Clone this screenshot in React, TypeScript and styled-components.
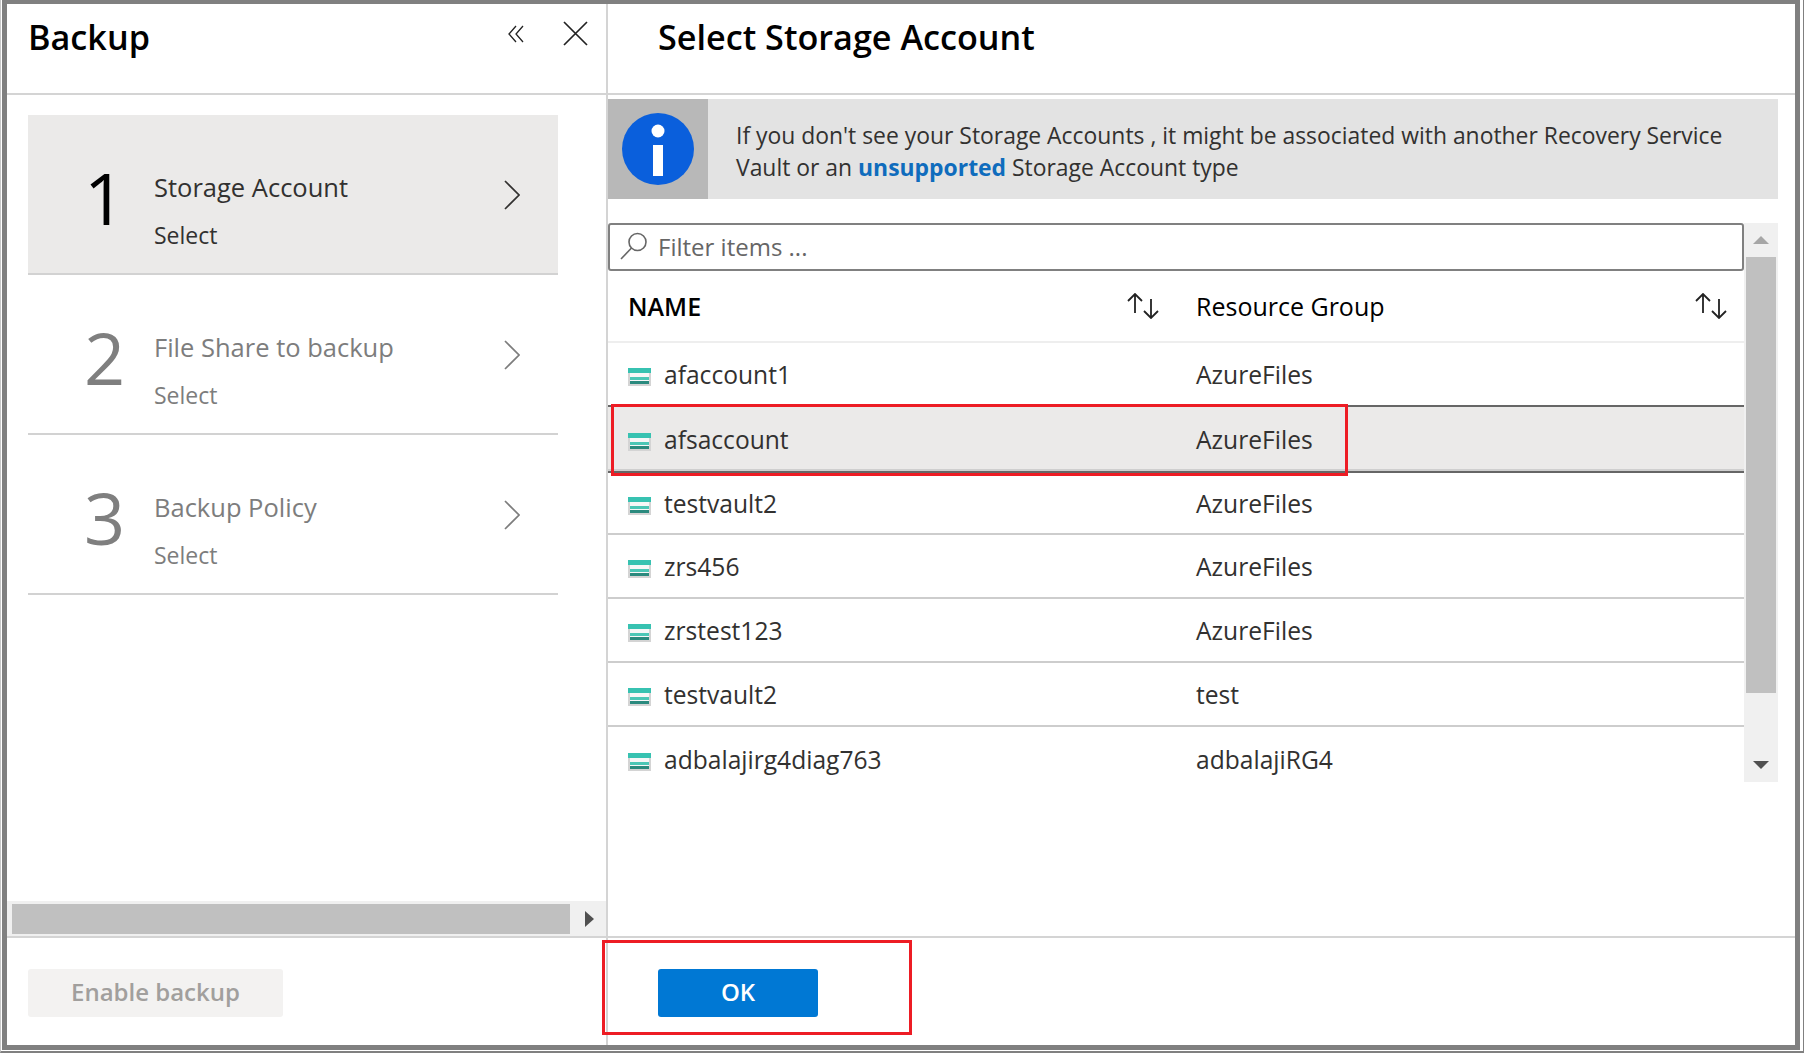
import styled, { createGlobalStyle } from 'styled-components';

const GlobalStyle = createGlobalStyle`
  html, body {
    margin: 0;
    padding: 0;
    background: #fff;
  }
  * {
    box-sizing: border-box;
  }
`;

const font = `"Open Sans", "Noto Sans", sans-serif`;

const Frame = styled.div`
  position: relative;
  width: 1804px;
  height: 1053px;
  padding: 0 3px 1px 1px;
  background: #fff;
  font-family: ${font};
  color: #323130;
  border-left: 1px solid #c8c8c8;
  border-right: 1px solid #808080;
  border-bottom: 2px solid #808080;
  overflow: hidden;
`;

const Inner = styled.div`
  height: 100%;
  display: flex;
  border-top: 4px solid #808080;
  border-left: 5px solid #808080;
  border-right: 5px solid #808080;
  border-bottom: 5px solid #808080;
`;

const LeftPanel = styled.section`
  width: 601px;
  flex: none;
  display: flex;
  flex-direction: column;
  border-right: 2px solid #d4d4d4;
`;

const RightPanel = styled.section`
  flex: 1;
  min-width: 0;
  display: flex;
  flex-direction: column;
`;

const Header = styled.header<{ $inset: number }>`
  height: 91px;
  flex: none;
  display: flex;
  align-items: flex-start;
  padding: 10px 0 0 ${({ $inset }) => $inset}px;
  border-bottom: 2px solid #d4d4d4;
`;

const Title = styled.h1`
  flex: 1;
  margin: 0;
  font-size: 34.2px;
  line-height: 46px;
  font-weight: 600;
  color: #000;
`;

const HeaderActions = styled.div`
  display: flex;
  align-items: center;
  gap: 39px;
  margin: 7px 18px 0 0;
  color: #222;
`;

const StepList = styled.div`
  flex: 1;
  padding: 20px 0 0 21px;
`;

const Step = styled.div<{ $active?: boolean }>`
  width: 530px;
  height: 160px;
  display: flex;
  padding-left: 56px;
  background: ${({ $active }) => ($active ? '#ebeae9' : 'transparent')};
  border-bottom: 2px solid #d2d2d2;
  color: ${({ $active }) => ($active ? '#323130' : '#7d7d7d')};
`;

const StepNumber = styled.div<{ $active?: boolean }>`
  width: 70px;
  font-size: 72px;
  line-height: 100px;
  padding-top: 32px;
  color: ${({ $active }) => ($active ? '#000' : '#7f7f7f')};
`;

const StepText = styled.div`
  flex: 1;
  padding-top: 56px;
`;

const StepTitle = styled.div`
  font-size: 25.5px;
  line-height: 33px;
`;

const StepSub = styled.div`
  margin-top: 16px;
  font-size: 23px;
  line-height: 30px;
`;

const StepChevron = styled.div`
  width: 54px;
  align-self: center;
  display: flex;
  margin-top: 2px;
`;

const HScroll = styled.div`
  height: 35px;
  flex: none;
  display: flex;
  align-items: center;
  background: #f0f0f0;
  padding-left: 5px;
`;

const HThumb = styled.div`
  width: 558px;
  height: 30px;
  background: #c0c0c0;
`;

const HArrow = styled.div`
  margin-left: 15px;
  width: 0;
  height: 0;
  border-left: 9px solid #505050;
  border-top: 8px solid transparent;
  border-bottom: 8px solid transparent;
`;

const Footer = styled.footer<{ $inset: number }>`
  height: 109px;
  flex: none;
  padding: 31px 0 0 ${({ $inset }) => $inset}px;
  border-top: 2px solid #d4d4d4;
`;

const Button = styled.button<{ $primary?: boolean }>`
  display: block;
  width: ${({ $primary }) => ($primary ? 160 : 255)}px;
  height: 48px;
  padding: 0 0 4px;
  border: 0;
  border-radius: 3px;
  font-family: inherit;
  font-size: 24px;
  font-weight: 600;
  background: ${({ $primary }) => ($primary ? '#0078d4' : '#f3f2f1')};
  color: ${({ $primary }) => ($primary ? '#fff' : '#a19f9d')};
`;

const Banner = styled.div`
  height: 100px;
  flex: none;
  margin: 4px 17px 0 0;
  display: flex;
  background: #e3e3e3;
`;

const BannerIcon = styled.div`
  width: 100px;
  flex: none;
  display: flex;
  align-items: center;
  justify-content: center;
  background: #b8b8b8;
`;

const BannerText = styled.p`
  margin: 0;
  padding: 21px 40px 0 28px;
  font-size: 22.9px;
  line-height: 31.5px;
  color: #323130;
`;

const BannerLink = styled.span`
  font-weight: 700;
  color: #0f6cbd;
`;

const ListArea = styled.div`
  display: flex;
  margin: 24px 17px 0 0;
`;

const Table = styled.div`
  position: relative;
  width: 1136px;
  flex: none;
`;

const FilterBox = styled.div`
  height: 48px;
  display: flex;
  align-items: center;
  gap: 9px;
  padding: 0 0 2px 9px;
  border: 2px solid #808080;
  border-radius: 3px;
  font-size: 24px;
  color: #666;
`;

const Row = styled.div<{ $selected?: boolean; $dark?: boolean; $height?: number; $last?: boolean }>`
  display: grid;
  grid-template-columns: 568px 568px;
  height: ${({ $height }) => $height ?? 64}px;
  align-items: center;
  font-size: 24.6px;
  background: ${({ $selected }) => ($selected ? '#ebeae9' : 'transparent')};
  border-bottom: ${({ $last }) => ($last ? 0 : 2)}px solid ${({ $dark }) => ($dark ? '#666' : '#cdcdcd')};
  ${({ $selected }) => $selected && 'box-shadow: inset 0 -2px #cfcfcf;'}
`;

const HeaderRow = styled(Row)`
  height: 72px;
  color: #000;
  font-size: 25px;
  border-bottom-color: #eeeeee;
`;

const HeadCell = styled.div`
  display: flex;
  align-items: center;
  justify-content: space-between;
  padding: 0 17px 0 20px;
`;

const HeadLabel = styled.span<{ $caps?: boolean }>`
  font-weight: ${({ $caps }) => ($caps ? 600 : 400)};
`;

const NameCell = styled.div`
  display: flex;
  align-items: center;
  gap: 13px;
  padding-left: 20px;
  svg {
    margin-top: 6px;
  }
`;

const GroupCell = styled.div`
  padding-left: 20px;
`;

const VScroll = styled.div`
  width: 34px;
  height: 559px;
  flex: none;
  display: flex;
  flex-direction: column;
  align-items: center;
  background: #f0f0f0;
`;

const VArrow = styled.div<{ $down?: boolean }>`
  width: 0;
  height: 0;
  border-left: 8px solid transparent;
  border-right: 8px solid transparent;
  ${({ $down }) =>
    $down
      ? 'border-top: 8px solid #505050; margin-top: 68px;'
      : 'border-bottom: 8px solid #a6a6a6; margin: 13px 0;'}
`;

const VThumb = styled.div`
  width: 30px;
  height: 436px;
  background: #c0c0c0;
`;

const Spacer = styled.div`
  flex: 1;
`;

const RedBox = styled.div`
  position: absolute;
  left: 3px;
  top: 181px;
  width: 737px;
  height: 72px;
  border: 3px solid #ed1c24;
  pointer-events: none;
`;

const RedBoxOk = styled.div`
  position: absolute;
  left: 601px;
  top: 940px;
  width: 310px;
  height: 95px;
  border: 3px solid #ed1c24;
  pointer-events: none;
`;

const CollapseIcon = () => (
  <svg width="16" height="20" viewBox="0 0 16 20" fill="none" stroke="currentColor" strokeWidth="1.3">
    <path d="M8 2 1 10l7 8M15 2l-7 8 7 8" />
  </svg>
);

const CloseIcon = () => (
  <svg width="25" height="25" viewBox="0 0 25 25" fill="none" stroke="currentColor" strokeWidth="1.7">
    <path d="M1 1l23 23M24 1 1 24" />
  </svg>
);

const ChevronIcon = () => (
  <svg width="16" height="30" viewBox="0 0 16 30" fill="none" stroke="currentColor" strokeWidth="1.7">
    <path d="M1 1l14 14L1 29" />
  </svg>
);

const InfoIcon = () => (
  <svg width="72" height="72" viewBox="0 0 72 72">
    <circle cx="36" cy="36" r="36" fill="#0a5fdc" />
    <circle cx="36" cy="18" r="6.5" fill="#fff" />
    <rect x="31" y="32" width="10" height="31" fill="#fff" />
  </svg>
);

const SearchIcon = () => (
  <svg width="30" height="30" viewBox="0 0 30 30" fill="none" stroke="#666" strokeWidth="1.6">
    <circle cx="18.5" cy="11" r="8.5" />
    <path d="M12.5 17 2 28" />
  </svg>
);

const SortIcon = () => (
  <svg width="33" height="26" viewBox="0 0 33 26" fill="none" stroke="#222" strokeWidth="1.8">
    <path d="M9 20V2M2 8l7-7 7 7" />
    <path d="M25 6v18M18 18l7 7 7-7" />
  </svg>
);

const StorageIcon = () => (
  <svg width="23" height="18" viewBox="0 0 23 18">
    <rect width="23" height="18" fill="#d4d4d4" />
    <rect x="2" y="5" width="19" height="11" fill="#f7f7f7" />
    <rect width="23" height="5" fill="#37c2b1" />
    <rect x="2" y="9" width="19" height="3" fill="#4cc7b6" />
    <rect x="2" y="13" width="19" height="3" fill="#2b8a7e" />
  </svg>
);

const steps = [
  { n: 1, title: 'Storage Account', active: true },
  { n: 2, title: 'File Share to backup' },
  { n: 3, title: 'Backup Policy' },
];

const accounts = [
  { name: 'afaccount1', group: 'AzureFiles', dark: true },
  { name: 'afsaccount', group: 'AzureFiles', selected: true, dark: true, height: 66 },
  { name: 'testvault2', group: 'AzureFiles', height: 62 },
  { name: 'zrs456', group: 'AzureFiles' },
  { name: 'zrstest123', group: 'AzureFiles' },
  { name: 'testvault2', group: 'test' },
  { name: 'adbalajirg4diag763', group: 'adbalajiRG4', last: true },
];

export default function App() {
  return (
    <Frame>
      <GlobalStyle />
      <Inner>
        <LeftPanel>
          <Header $inset={21}>
            <Title>Backup</Title>
            <HeaderActions>
              <CollapseIcon />
              <CloseIcon />
            </HeaderActions>
          </Header>
          <StepList>
            {steps.map(step => (
              <Step key={step.n} $active={step.active}>
                <StepNumber $active={step.active}>{step.n}</StepNumber>
                <StepText>
                  <StepTitle>{step.title}</StepTitle>
                  <StepSub>Select</StepSub>
                </StepText>
                <StepChevron>
                  <ChevronIcon />
                </StepChevron>
              </Step>
            ))}
          </StepList>
          <HScroll>
            <HThumb />
            <HArrow />
          </HScroll>
          <Footer $inset={21}>
            <Button>Enable backup</Button>
          </Footer>
        </LeftPanel>
        <RightPanel>
          <Header $inset={50}>
            <Title>Select Storage Account</Title>
          </Header>
          <Banner>
            <BannerIcon>
              <InfoIcon />
            </BannerIcon>
            <BannerText>
              If you don't see your Storage Accounts , it might be associated with another Recovery Service
              Vault or an <BannerLink>unsupported</BannerLink> Storage Account type
            </BannerText>
          </Banner>
          <ListArea>
            <Table>
              <FilterBox>
                <SearchIcon />
                <span>Filter items ...</span>
              </FilterBox>
              <HeaderRow>
                <HeadCell>
                  <HeadLabel $caps>NAME</HeadLabel>
                  <SortIcon />
                </HeadCell>
                <HeadCell>
                  <HeadLabel>Resource Group</HeadLabel>
                  <SortIcon />
                </HeadCell>
              </HeaderRow>
              {accounts.map((account, index) => (
                <Row
                  key={index}
                  $selected={account.selected}
                  $dark={account.dark}
                  $height={account.height}
                  $last={account.last}
                >
                  <NameCell>
                    <StorageIcon />
                    {account.name}
                  </NameCell>
                  <GroupCell>{account.group}</GroupCell>
                </Row>
              ))}
              <RedBox />
            </Table>
            <VScroll>
              <VArrow />
              <VThumb />
              <VArrow $down />
            </VScroll>
          </ListArea>
          <Spacer />
          <Footer $inset={50}>
            <Button $primary>OK</Button>
          </Footer>
        </RightPanel>
      </Inner>
      <RedBoxOk />
    </Frame>
  );
}
